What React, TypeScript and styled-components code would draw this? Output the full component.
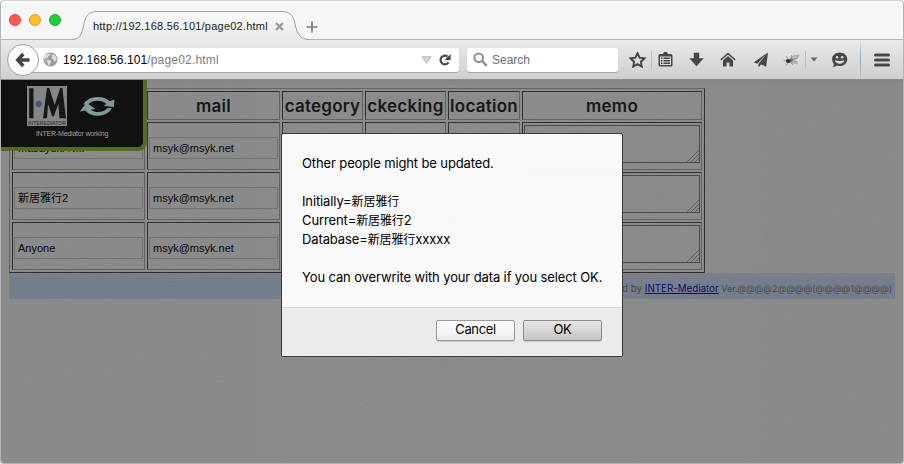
import React from "react";
import styled, { createGlobalStyle, css } from "styled-components";

const ui = `"Liberation Sans", Arial, sans-serif`;
const rounded = `Inter, "Noto Sans CJK JP", sans-serif`;
const native = `"Liberation Sans", "Noto Sans CJK JP", sans-serif`;

const Global = createGlobalStyle`
  * { box-sizing: border-box; }
  html, body { margin: 0; padding: 0; background: #e4e4e4; }
  body { overflow: hidden; }
`;

const Window = styled.div`
  position: relative;
  display: flex;
  flex-direction: column;
  width: 904px;
  height: 464px;
  border: solid #b4b4b4;
  border-width: 0 1px 1px;
  border-radius: 5px 5px 4px 4px;
  overflow: hidden;
  font-family: ${ui};
`;

/* ---------- Title bar ---------- */

const TitleBar = styled.header`
  display: flex;
  height: 40px;
  background: #f6f6f6;
  border-top: 1px solid #d2d2d2;
  box-shadow: inset 0 -1px 0 #b6b6b6;
`;

const Lights = styled.div`
  display: flex;
  align-items: center;
  gap: 8px;
  width: 71px;
  padding-left: 8px;
  height: 38px;
`;

const Light = styled.span<{ $fill: string; $ring: string }>`
  width: 12px;
  height: 12px;
  border-radius: 50%;
  background: ${(p) => p.$fill};
  border: 1px solid ${(p) => p.$ring};
`;

const Tab = styled.div`
  display: grid;
  width: 238px;
  height: 39px;
  > * { grid-area: 1 / 1; }
`;

const TabShape = styled.svg`
  display: block;
  width: 238px;
  height: 39px;
`;

const TabLabel = styled.div`
  display: flex;
  align-items: center;
  padding: 11px 0 0 21px;
  height: 39px;
  font-size: 11px;
  letter-spacing: 0.22px;
  color: #222;
  white-space: nowrap;
  z-index: 1;
  svg { margin-left: 7px; }
`;

const NewTab = styled.div`
  margin: 20px 0 0 -4px;
  line-height: 0;
`;

/* ---------- Toolbar ---------- */

const Toolbar = styled.nav`
  display: flex;
  align-items: center;
  height: 40px;
  padding-left: 6px;
  background: linear-gradient(#e9e9e9, #cfcfcf);
  border-bottom: 1px solid #8e8e8e;
`;

const BackButton = styled.div`
  position: relative;
  z-index: 1;
  display: flex;
  align-items: center;
  justify-content: center;
  flex: none;
  width: 32px;
  height: 32px;
  border-radius: 50%;
  border: 1px solid #a2a2a2;
  background: #fbfbfb;
`;

const field = css`
  display: flex;
  align-items: center;
  flex: none;
  height: 24px;
  background: #fff;
  box-shadow: 0 1px 0 #a5a5a5;
  font-size: 12px;
`;

const UrlBar = styled.div`
  ${field}
  width: 428px;
  margin-left: -8px;
  padding-left: 12px;
  border-radius: 0 3px 3px 0;
`;

const UrlText = styled.span`
  flex: 1;
  margin-left: 5px;
  padding-top: 1px;
  color: #7c7c7c;
  letter-spacing: 0.2px;
  b { font-weight: 400; color: #000; letter-spacing: 0.05px; }
`;

const UrlActions = styled.div`
  display: flex;
  align-items: center;
  gap: 6px;
  padding-right: 7px;
`;

const SearchBox = styled.div`
  ${field}
  width: 151px;
  margin-left: 8px;
  padding-left: 6px;
  gap: 4px;
  border-radius: 3px;
  color: #6f6f6f;
`;

const Tools = styled.div`
  display: flex;
  align-items: center;
  margin-left: 5px;
`;

const Tool = styled.span<{ $w: number }>`
  display: flex;
  align-items: center;
  justify-content: center;
  width: ${(p) => p.$w}px;
  height: 24px;
`;

const Divider = styled.i<{ $tall?: boolean }>`
  width: 1px;
  height: ${(p) => (p.$tall ? 38 : 18)}px;
  background: ${(p) =>
    p.$tall ? "linear-gradient(#d8dde1, #94a1ab 50%, #c3cad0)" : "#bdbdbd"};
`;

/* ---------- Page ---------- */

const Page = styled.main`
  position: relative;
  flex: 1;
  padding: 8px 8px 0;
  background-color: #898989;
  background-image: linear-gradient(rgba(0, 0, 0, 0.06), transparent 5px);
`;

const Grain = styled.svg`
  position: absolute;
  inset: 0;
  width: 100%;
  height: 100%;
  opacity: 0.08;
`;

const DataTable = styled.div`
  display: grid;
  grid-template-columns: 133px 133px 81px 81px 72px 180px;
  grid-template-rows: 29px;
  grid-auto-rows: 48px;
  gap: 2px;
  width: 696px;
  padding: 2px;
  border: 1px solid;
  border-color: #606060 #292929 #292929 #606060;
`;

const Cell = styled.div`
  display: flex;
  align-items: center;
  padding: 1px;
  border: 1px solid;
  border-color: #2c2c2c #606060 #606060 #2c2c2c;
`;

const HeadCell = styled(Cell)`
  justify-content: center;
  font: 600 17px/24px ${rounded};
  letter-spacing: 0.25px;
  color: #111;
  white-space: nowrap;
`;

const TextInput = styled.div`
  width: 129px;
  height: 22px;
  margin-top: 4px;
  padding-left: 3px;
  border: 1px solid #707070;
  font: 11px/21px ${native};
  color: #000;
`;

const TextArea = styled.div`
  display: flex;
  align-items: flex-end;
  justify-content: flex-end;
  align-self: flex-start;
  width: 176px;
  height: 38px;
  margin-top: 1px;
  flex: none;
  border: 1px solid #474747;
`;

const Credit = styled.footer`
  display: flex;
  justify-content: flex-end;
  height: 26px;
  padding-right: 3px;
  background: linear-gradient(#7d7e84, #737b8a 6px);
  font: 9.75px/31px ${rounded};
  color: #444;
  white-space: pre;
  a { color: #0d0070; text-decoration: underline; }
`;

const Version = styled.span`
  font-size: 9px;
  font-feature-settings: "calt" 0;
`;

const WorkingBadge = styled.aside`
  position: absolute;
  left: 0;
  top: 0;
  display: flex;
  flex-direction: column;
  align-items: center;
  width: 146px;
  height: 71px;
  padding-top: 6px;
  background: #111;
  border: solid #516a25;
  border-width: 0 4px 4px 0;
  border-radius: 0 0 9px 0;
`;

const BadgeMarks = styled.div`
  display: flex;
  align-items: center;
  gap: 12px;
  margin-left: -1px;
`;

const BadgeText = styled.span`
  margin-top: 3px;
  font: 7px/10px ${ui};
  letter-spacing: -0.2px;
  color: #a2a098;
`;

/* ---------- Dialog ---------- */

const Dialog = styled.section`
  position: absolute;
  left: 280px;
  top: 133px;
  display: flex;
  flex-direction: column;
  width: 342px;
  height: 224px;
  background: rgba(252, 252, 252, 0.975);
  border: 1px solid #3a3a3a;
  border-radius: 2px;
  background-clip: padding-box;
  font: 13px/19px ${rounded};
  letter-spacing: -0.12px;
  color: #000;
`;

const Message = styled.div`
  flex: 1;
  padding: 20px 20px 0;
  white-space: nowrap;
`;

const Line = styled.p`
  margin: 0;
  height: 19px;
`;

const Kanji = styled.span`
  font: 12px/0 "Noto Sans CJK JP", sans-serif;
  letter-spacing: -0.1px;
`;

const Actions = styled.div`
  display: flex;
  justify-content: flex-end;
  gap: 8px;
  height: 49px;
  padding: 12px 20px 0;
  background: #ebebeb;
  border-top: 1px solid #d9d9d9;
`;

const Button = styled.button<{ $primary?: boolean }>`
  width: 79px;
  height: 21px;
  padding: 0 0 2px;
  border: 1px solid ${(p) => (p.$primary ? "#8c8c8c" : "#9a9a9a")};
  border-radius: 2px;
  background: ${(p) =>
    p.$primary ? "linear-gradient(#e6e6e6, #c4c4c4)" : "linear-gradient(#fff, #ececec)"};
  box-shadow: 0 1px 1px rgba(0, 0, 0, 0.14);
  font: 13px/17px ${rounded};
  letter-spacing: -0.35px;
  color: #000;
`;

/* ---------- Drawings ---------- */

const Resizer = () => (
  <svg width="12" height="12" viewBox="0 0 12 12" stroke="#5a5a5a" strokeWidth="1" fill="none">
    <path d="M0 12L12 0M4 12L12 4M8 12L12 8" />
  </svg>
);

const Globe = () => (
  <svg width="15" height="15" viewBox="0 0 15 15">
    <circle cx="7.5" cy="7.5" r="7" fill="#9b9b9b" />
    <path d="M2.3 3.2l3-1.5 2.2.4-.8 1.5-1.8.9.4 1.3-2 .3-.4 1.7-1.7-.5c0-1.7.3-3 1.1-4.1zM4.6 7.6l2.7.6 1 1.7-1.5 1.5-.4 2.2-1.5-.6-.3-2.6-1-1.2zM9 2.6l2.4.3 1.9 2.4.3 2.7-1.5 1.4-1.3-.3-.4-2-1.7-.6.2-1.9z" fill="#dedede" />
  </svg>
);

const IconStar = () => (
  <svg width="17" height="16" viewBox="0 0 17 16">
    <path d="M8.5 1.2l2.1 4.5 4.9.6-3.600 3.400.9 4.900-4.300-2.500-4.300 2.500.9-4.900L1.500 6.300l4.900-.6z" fill="none" stroke="#474747" strokeWidth="1.9" />
  </svg>
);

const IconClipboard = () => (
  <svg width="15" height="15" viewBox="0 0 15 15" fill="#474747">
    <path fillRule="evenodd" d="M2 2h3.200a2.300 2.300 0 0 1 4.600 0H13a1.500 1.500 0 0 1 1.500 1.500v9.500A1.500 1.500 0 0 1 13 14.500H2A1.500 1.500 0 0 1 .5 13V3.500A1.500 1.500 0 0 1 2 2zM2 4.500v8.500h11V4.500z" />
    <path d="M3 5.500h1.500v1.500H3zM3 8h1.500v1.500H3zM3 10.500h1.500V12H3zM5.500 5.500H12V7H5.500zM5.500 8H12v1.500H5.500zM5.500 10.500H12V12H5.500z" />
  </svg>
);

const IconDownload = () => (
  <svg width="15" height="15" viewBox="0 0 15 15" fill="#474747">
    <path d="M4.800.7h5.400v5.600h4.500L7.500 14.300.3 6.300h4.500z" />
  </svg>
);

const IconHome = () => (
  <svg width="16" height="15" viewBox="0 0 16 15" fill="#474747">
    <path d="M8 .5l7.700 7.100-1 1L8 2.500 1.300 8.600l-1-1z" />
    <path d="M8 3.900l5 4.600v6H9.500v-4h-3v4H3v-6z" />
  </svg>
);

const IconPlane = () => (
  <svg width="16" height="16" viewBox="0 0 16 16" fill="#474747">
    <path d="M15 .4L.8 10.200l3.500 1.500zM15 .4L5.400 11.900l.2 3.600 2-2.500zM15 .4L7.900 12.200l5.300 2.600z" />
  </svg>
);

const IconBug = () => (
  <svg width="17" height="14" viewBox="0 0 17 14" fill="none">
    <path d="M7 6c2-3 6-4.500 9-3.500-1 2.500-4 4-8 4.500zM8 8.300c3-.5 6-.2 7 1.200-2 1.500-5 .7-7.500-.2z" fill="#b9b9b9" stroke="#8c8c8c" strokeWidth=".6" />
    <path d="M5 6L3.500 3.500M8 5.500L8.500 2M9.500 7l5-2M8 9.500l2 2.500M5 10l-2 2.500M2.500 8L.6 7" stroke="#7a7a7a" strokeWidth=".7" />
    <ellipse cx="5.300" cy="8" rx="2.500" ry="2" fill="#333" />
    <circle cx="8.500" cy="7" r="1.400" fill="#666" />
  </svg>
);

const IconChat = () => (
  <svg width="17" height="16" viewBox="0 0 17 16">
    <path d="M8.700.6c4.300 0 7.600 2.900 7.600 6.700s-3.300 6.800-7.600 6.800c-1 0-2-.2-2.900-.5-1.200 1.200-2.700 1.600-4.300 1.400.9-.8 1.400-1.900 1.400-3.100C1.700 10.700 1.100 9.100 1.100 7.300 1.100 3.500 4.400.6 8.700.6z" fill="#474747" />
    <circle cx="6.100" cy="5.300" r="1.250" fill="#dedede" />
    <circle cx="11.200" cy="5.300" r="1.250" fill="#dedede" />
    <path d="M3.900 8.200q4.800 1.600 9.600 0c-.5 2.100-2.400 3.500-4.800 3.500S4.300 10.300 3.900 8.200z" fill="#dedede" />
  </svg>
);

const Logo = () => (
  <svg width="40" height="40" viewBox="0 0 40 40">
    <rect width="40" height="40" fill="#858585" />
    <path d="M2.200 2.300h4.300v30H2.200zM16 32.300L20 2h2.300l5.400 17L33.200 2h2.200L39 32.300h-6.500L31.300 18l-4.500 12.500h-1.500L21 18l-1 14.300z" fill="#151815" />
    <circle cx="11.700" cy="18" r="3.200" fill="#4f5280" />
    <text x="1" y="38.600" textLength="38" lengthAdjust="spacingAndGlyphs" fontFamily="Liberation Sans" fontSize="5.600" fill="#222">INTEREDIATOR</text>
  </svg>
);

const Cycle = () => (
  <svg width="37" height="21" viewBox="0 0 37 21" fill="#809a9b">
    <path d="M4.500 8.600C7 3.700 12.500 1 18.500 1c5 0 9.300 1.500 12.300 4.300L35.500 3.500 34.800 11l-10.300-1.200 3-1.700C25 5.700 22 4.800 18.500 4.800c-4 0-7.600 1.400-9.800 4.200z" />
    <path d="M32.800 12.300C30 17 25 19.800 19 19.800c-5.300 0-10-1.900-12.800-5.300L.8 15.400 7.600 6.800l8.900 6.300-4.800.7c1.900 1.500 4.600 2.300 7.500 2.300 4 0 7.200-1.400 9.300-4.100z" />
  </svg>
);

const rows = ["Masayuki N...", "新居雅行2", "Anyone"];

const headings = ["", "mail", "category", "ckecking", "location", "memo"];

export default function App() {
  return (
    <Window>
      <Global />
      <TitleBar>
        <Lights>
          <Light $fill="#ff5b54" $ring="#e2443f" />
          <Light $fill="#fdbb2d" $ring="#dfa023" />
          <Light $fill="#26c83f" $ring="#1bac2d" />
        </Lights>
        <Tab>
          <TabShape viewBox="0 0 238 39">
            <defs>
              <linearGradient id="tab" x1="0" y1="0" x2="0" y2="1">
                <stop offset="0" stopColor="#fbfbfb" />
                <stop offset="1" stopColor="#e9e9e9" />
              </linearGradient>
            </defs>
            <path d="M0 38.500C8 38.500 10 32 11.500 25C13 16 16 10.500 25 10.500H210C219 10.500 222 16 223.500 25C225 32 228 38.500 237 38.500V39H0Z" fill="url(#tab)" />
            <path d="M0 38.500C8 38.500 10 32 11.500 25C13 16 16 10.500 25 10.500H210C219 10.500 222 16 223.500 25C225 32 228 38.500 237 38.500" fill="none" stroke="#9f9f9f" />
          </TabShape>
          <TabLabel>
            http://192.168.56.101/page02.html
            <svg width="9" height="9" viewBox="0 0 9 9" stroke="#9a9a9a" strokeWidth="2.400">
              <path d="M1 1l7 7M8 1L1 8" />
            </svg>
          </TabLabel>
        </Tab>
        <NewTab>
          <svg width="12" height="12" viewBox="0 0 12 12" stroke="#7f7f7f" strokeWidth="1.700">
            <path d="M6 .5v11M.5 6h11" />
          </svg>
        </NewTab>
      </TitleBar>

      <Toolbar>
        <BackButton>
          <svg width="16" height="16" viewBox="0 0 16 16" fill="none" stroke="#444" strokeWidth="3.400">
            <path d="M8.300 2L2.700 8l5.600 6M3 8h11.500" />
          </svg>
        </BackButton>
        <UrlBar>
          <Globe />
          <UrlText>
            <b>192.168.56.101</b>/page02.html
          </UrlText>
          <UrlActions>
            <svg width="11" height="8" viewBox="0 0 11 8">
              <path d="M1 .8h9L5.500 7.200z" fill="#d9d9d9" stroke="#b4b4b4" />
            </svg>
            <svg width="14" height="14" viewBox="0 0 14 14">
              <path d="M10.500 9.300A4.300 4.300 0 1 1 9.500 3.600" fill="none" stroke="#474747" strokeWidth="2.200" />
              <path d="M12.600.9v6H6.600z" fill="#474747" />
            </svg>
          </UrlActions>
        </UrlBar>
        <SearchBox>
          <svg width="15" height="15" viewBox="0 0 15 15" fill="none" stroke="#8c8c8c">
            <circle cx="5.700" cy="5.700" r="4.300" strokeWidth="2" />
            <path d="M9 9l4.800 4.800" strokeWidth="2.400" />
          </svg>
          Search
        </SearchBox>
        <Tools>
          <Tool $w={28}><IconStar /></Tool>
          <Divider />
          <Tool $w={27}><IconClipboard /></Tool>
          <Tool $w={35}><IconDownload /></Tool>
          <Tool $w={28}><IconHome /></Tool>
          <Tool $w={38}><IconPlane /></Tool>
          <Tool $w={22}><IconBug /></Tool>
          <Tool $w={3} />
          <Divider />
          <Tool $w={15}>
            <svg width="8" height="5" viewBox="0 0 8 5">
              <path d="M.5.500h7L4 4.500z" fill="#666" />
            </svg>
          </Tool>
          <Tool $w={37}><IconChat /></Tool>
          <Tool $w={2} />
          <Divider $tall />
          <Tool $w={41}>
            <svg width="16" height="14" viewBox="0 0 16 14" stroke="#474747" strokeWidth="3" strokeLinecap="round">
              <path d="M1.500 2h13M1.500 7h13M1.500 12h13" />
            </svg>
          </Tool>
        </Tools>
      </Toolbar>

      <Page>
        <DataTable>
          {headings.map((h) => (
            <HeadCell key={h}>{h}</HeadCell>
          ))}
          {rows.map((name) => (
            <React.Fragment key={name}>
              <Cell><TextInput>{name}</TextInput></Cell>
              <Cell><TextInput>msyk@msyk.net</TextInput></Cell>
              <Cell />
              <Cell />
              <Cell />
              <Cell><TextArea><Resizer /></TextArea></Cell>
            </React.Fragment>
          ))}
        </DataTable>
        <Credit>
          <span>Generated by </span>
          <a>INTER-Mediator</a>
          <Version> Ver.@@@@2@@@@(@@@@1@@@@)</Version>
        </Credit>
        <Grain>
          <filter id="grain">
            <feTurbulence type="fractalNoise" baseFrequency="0.55" numOctaves="2" />
            <feColorMatrix type="saturate" values="0" />
          </filter>
          <rect width="100%" height="100%" filter="url(#grain)" />
        </Grain>
        <WorkingBadge>
          <BadgeMarks>
            <Logo />
            <Cycle />
          </BadgeMarks>
          <BadgeText>INTER-Mediator working</BadgeText>
        </WorkingBadge>
      </Page>

      <Dialog>
        <Message>
          <Line>Other people might be updated.</Line>
          <Line />
          <Line>Initially=<Kanji>新居雅行</Kanji></Line>
          <Line>Current=<Kanji>新居雅行</Kanji>2</Line>
          <Line>Database=<Kanji>新居雅行</Kanji>xxxxx</Line>
          <Line />
          <Line>You can overwrite with your data if you select OK.</Line>
        </Message>
        <Actions>
          <Button>Cancel</Button>
          <Button $primary>OK</Button>
        </Actions>
      </Dialog>
    </Window>
  );
}
